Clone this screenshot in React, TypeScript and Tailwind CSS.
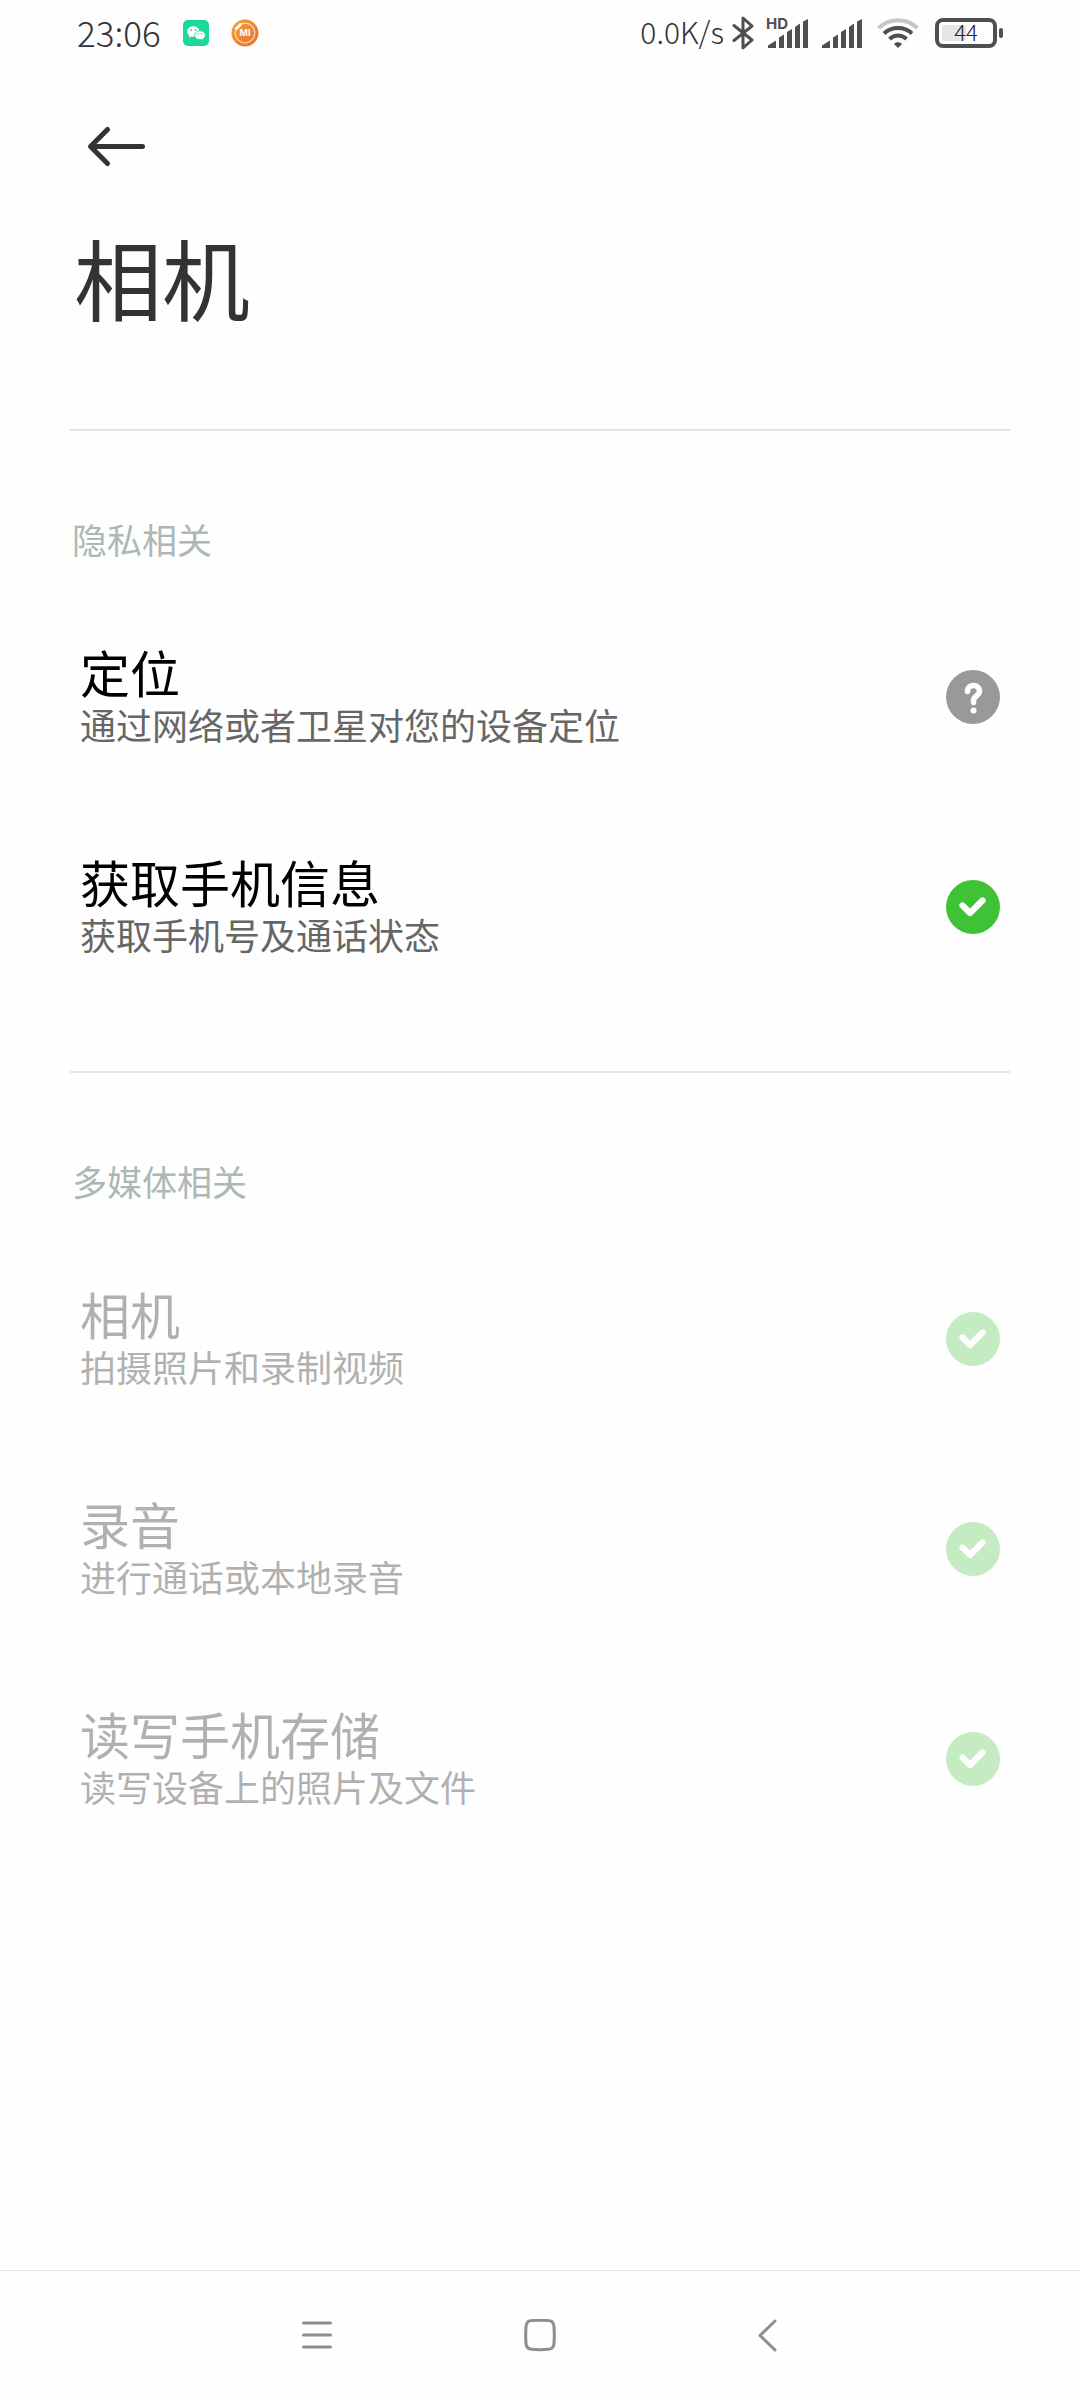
import { clsx } from "clsx";

type PermissionStatus = "ask" | "allowed";

type Permission = {
  title: string;
  description: string;
  status: PermissionStatus;
  disabled?: boolean;
};

type PermissionGroup = {
  label: string;
  items: Permission[];
};

const groups: PermissionGroup[] = [
  {
    label: "隐私相关",
    items: [
      { title: "定位", description: "通过网络或者卫星对您的设备定位", status: "ask" },
      { title: "获取手机信息", description: "获取手机号及通话状态", status: "allowed" },
    ],
  },
  {
    label: "多媒体相关",
    items: [
      { title: "相机", description: "拍摄照片和录制视频", status: "allowed", disabled: true },
      { title: "录音", description: "进行通话或本地录音", status: "allowed", disabled: true },
      { title: "读写手机存储", description: "读写设备上的照片及文件", status: "allowed", disabled: true },
    ],
  },
];

function WeChatIcon() {
  return (
    <svg width="26" height="26" viewBox="0 0 26 26" aria-hidden="true">
      <rect width="26" height="26" rx="5" fill="#1bd99a" />
      <path d="M10.3 6.3c-3.5 0-6.2 2.3-6.2 5.2 0 1.7.9 3.2 2.4 4.1l-.5 2.2 2.4-1.3c.6.1 1.2.2 1.9.2 3.5 0 6.2-2.3 6.2-5.2s-2.7-5.2-6.2-5.2z" fill="#fff" />
      <path d="M17 10.8c-3 0-5.3 1.9-5.3 4.4s2.3 4.4 5.3 4.4c.6 0 1.1-.1 1.6-.2l2 1-.4-1.8c1.3-.8 2.1-2 2.1-3.4 0-2.5-2.3-4.4-5.3-4.4z" fill="#fff" stroke="#1bd99a" strokeWidth="0.8" />
      <circle cx="8.2" cy="10" r="0.9" fill="#1bd99a" />
      <circle cx="12.4" cy="10" r="0.9" fill="#1bd99a" />
      <circle cx="15.3" cy="13.8" r="0.8" fill="#1bd99a" />
      <circle cx="18.7" cy="13.8" r="0.8" fill="#1bd99a" />
    </svg>
  );
}

function MiCoinIcon() {
  return (
    <svg width="28" height="28" viewBox="0 0 28 28" aria-hidden="true">
      <defs>
        <linearGradient id="coin" x1="0" y1="0" x2="1" y2="1">
          <stop offset="0" stopColor="#f2a03c" />
          <stop offset="1" stopColor="#ec6f2c" />
        </linearGradient>
      </defs>
      <circle cx="14" cy="14" r="13.5" fill="url(#coin)" />
      <circle cx="14" cy="14" r="9.8" fill="none" stroke="#fbdcc0" strokeWidth="1.2" />
      <path d="M5.5 9.5l4-4" stroke="#fff" strokeWidth="3" strokeLinecap="round" />
      <text x="14" y="17" textAnchor="middle" fontSize="9" fontWeight="700" fontFamily="Inter, sans-serif" fill="#fff">
        MI
      </text>
    </svg>
  );
}

function BluetoothIcon() {
  return (
    <svg width="22" height="34" viewBox="0 0 22 34" fill="none" stroke="#4f4f4f" strokeWidth="3" strokeLinecap="round" strokeLinejoin="round" aria-hidden="true">
      <path d="M2 9.5l18 14.5-9 8V2l9 8L2 24.5" />
    </svg>
  );
}

function SignalIcon({ hd = false }: { hd?: boolean }) {
  return (
    <svg width="42" height="42" viewBox="-2 -5 42 42" fill="#4f4f4f" aria-hidden="true">
      <path d="M0 31v-2.500l8-5V31zM11 31V20.500l5-3V31zM19 31V15l5-3V31zM27 31V10l5-3.500V31zM35 31V4.500l5-2.500V31z" />
      {hd && (
        <text x="-2" y="12" fontSize="15" fontWeight="700" fontFamily="Inter, sans-serif">
          HD
        </text>
      )}
    </svg>
  );
}

function WifiIcon() {
  return (
    <svg width="42" height="32" viewBox="0 0 42 32" fill="none" stroke="#4f4f4f" strokeWidth="4" aria-hidden="true">
      <path d="M1.5 11C13 .5 29 .5 40.5 11" stroke="#c6c6c6" />
      <path d="M7 16.5c8-7.3 20-7.3 28 0" />
      <path d="M12.5 22c5-4.6 12-4.6 17 0" />
      <path d="M17 27c2-2.500 6-2.500 8 0l-4 4z" fill="#4f4f4f" stroke="none" />
    </svg>
  );
}

function Battery({ level }: { level: number }) {
  return (
    <div className="flex items-center gap-0.5">
      <div className="relative flex h-[30px] w-[62px] items-center justify-center rounded-lg border-4 border-[#4f4f4f]">
        <div className="absolute inset-y-[3px] left-[3px] rounded-xs bg-[#e6e6e6]" style={{ width: `${level}%` }} />
        <span className="relative pb-1 text-[22px] leading-none font-light text-[#222]">{level}</span>
      </div>
      <div className="h-[10px] w-1 rounded-xs bg-[#4f4f4f]" />
    </div>
  );
}

function StatusBar() {
  return (
    <div className="flex h-[66px] items-center justify-between px-[77px] text-[#333]">
      <div className="flex items-center gap-[22px]">
        <time className="pb-1 text-[35px] leading-none font-light">23:06</time>
        <WeChatIcon />
        <MiCoinIcon />
      </div>
      <div className="flex items-center">
        <span className="mr-2 pb-1 text-[30px] leading-none font-light">0.0K/s</span>
        <BluetoothIcon />
        <div className="mr-[15px] ml-3 flex gap-3">
          <SignalIcon hd />
          <SignalIcon />
        </div>
        <WifiIcon />
        <div className="ml-4">
          <Battery level={44} />
        </div>
      </div>
    </div>
  );
}

function StatusIcon({ status }: { status: PermissionStatus }) {
  return (
    <svg width="54" height="54" viewBox="0 0 54 54" fill="none" stroke="#fff" strokeLinecap="round" strokeLinejoin="round" className="shrink-0" aria-hidden="true">
      {status === "ask" ? (
        <>
          <circle cx="27" cy="27" r="27" fill="#999" stroke="none" />
          <path d="M21.5 21.500C21.5 17.500 24 15.500 27.500 15.500s6 2.300 6 5.500c0 5-6 5-6 9.500v2" strokeWidth="5.5" />
          <circle cx="27.5" cy="40.5" r="3" fill="#fff" stroke="none" />
        </>
      ) : (
        <>
          <circle cx="27" cy="27" r="27" fill="#40c236" stroke="none" />
          <path d="M16.5 25.5l7.500 7.500L36.500 20.500" strokeWidth="6.2" />
        </>
      )}
    </svg>
  );
}

function PermissionRow({ title, description, status, disabled }: Permission) {
  return (
    <li>
      <button
        type="button"
        disabled={disabled}
        className={clsx(
          "flex h-[210px] w-full items-center justify-between px-20 text-left",
          disabled && "opacity-30"
        )}
      >
        <span className="flex flex-col">
          <span className="text-[50px] leading-[54px] text-black">{title}</span>
          <span className={clsx("text-[36px] leading-[52px]", disabled ? "text-black" : "text-[#666]")}>
            {description}
          </span>
        </span>
        <StatusIcon status={status} />
      </button>
    </li>
  );
}

function NavigationBar() {
  return (
    <nav className="mt-auto flex h-[130px] items-center justify-center gap-32 border-t border-[#e2e2e2]">
      <button type="button" aria-label="菜单" className="flex w-24 justify-center">
        <svg width="34" height="34" viewBox="0 0 34 34" stroke="#8e8e8e" strokeWidth="3" strokeLinecap="round">
          <path d="M4.5 4h27M4.5 16h27M4.5 28h27" />
        </svg>
      </button>
      <button type="button" aria-label="主屏幕" className="flex w-24 justify-center">
        <svg width="34" height="34" viewBox="0 1 34 34" fill="none" stroke="#8e8e8e" strokeWidth="3">
          <path d="M8.5 2.500Q17 1.800 25.500 2.500 30.500 2.800 31 8.500q.6 8.500 0 17-.5 5.500-5.500 5.800-8.500.7-17 0-5-.3-5.500-5.800-.6-8.500 0-17 .5-5.700 5.500-6z" />
        </svg>
      </button>
      <button type="button" aria-label="返回" className="flex w-24 justify-center">
        <svg width="34" height="34" viewBox="0 0 34 34" fill="none" stroke="#8e8e8e" strokeWidth="3" strokeLinecap="round" strokeLinejoin="round">
          <path d="M28 2L13 16.500 28 31" />
        </svg>
      </button>
    </nav>
  );
}

export default function App() {
  return (
    <div className="flex min-h-screen flex-col bg-[#fefefe] font-['Noto_Sans_CJK_SC','Noto_Sans',sans-serif]">
      <StatusBar />

      <header className="flex flex-col items-start pl-[74px]">
        <a href="#back" aria-label="返回" className="mt-[50px] ml-3">
          <svg width="60" height="60" viewBox="0 0 60 60" fill="none" stroke="#333" strokeWidth="5" strokeLinecap="round" strokeLinejoin="round">
            <path d="M56.500 30.500H5M21.500 13.500l-17 17 17 17" />
          </svg>
        </a>
        <h1 className="mt-10 mb-[93px] text-[88px] leading-[120px] text-[#333]">相机</h1>
      </header>

      <main>
        {groups.map((group) => (
          <section key={group.label} className="pb-[59px]">
            <hr className="mx-[70px] border-t-2 border-[#e4e4e4]" />
            <h2 className="mt-[82px] mb-[27px] pl-[72px] text-[35px] leading-[52px] text-[#adb8b4]">{group.label}</h2>
            <ul>
              {group.items.map((item) => (
                <PermissionRow key={item.title} {...item} />
              ))}
            </ul>
          </section>
        ))}
      </main>

      <NavigationBar />
    </div>
  );
}
